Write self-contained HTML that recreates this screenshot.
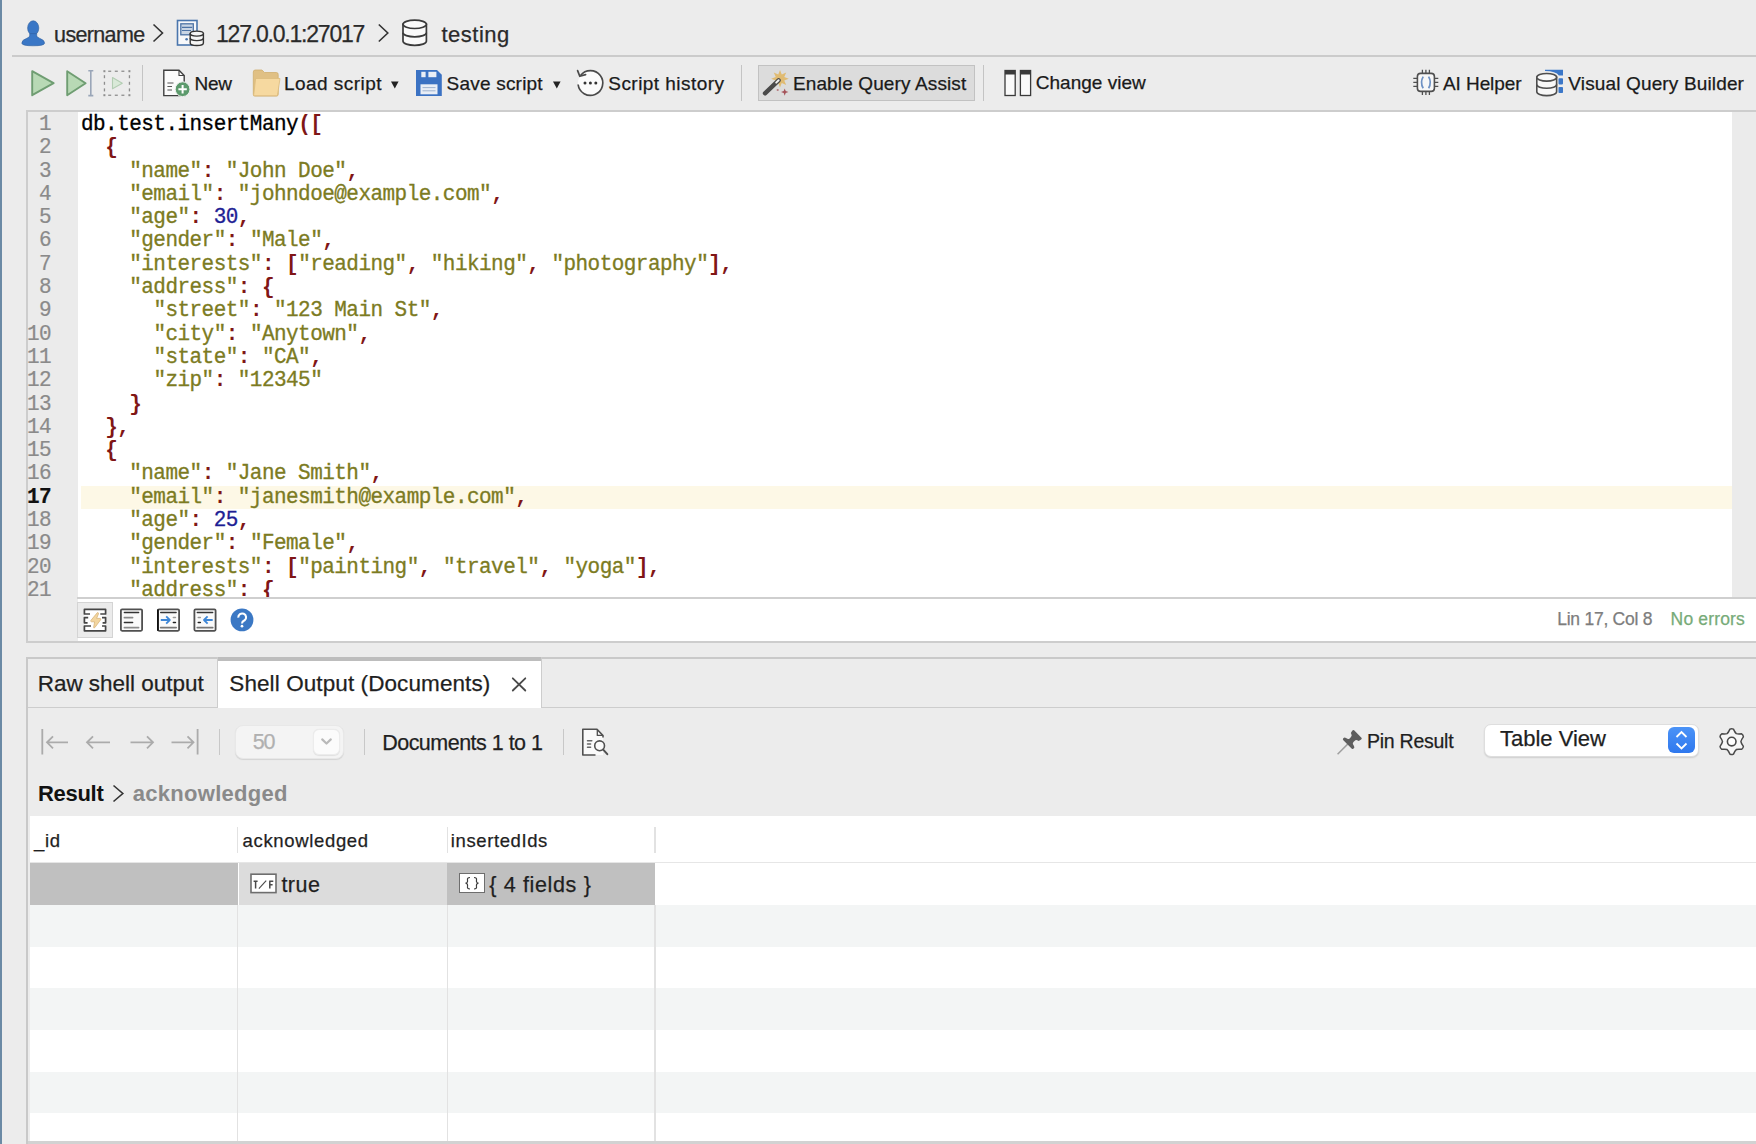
<!DOCTYPE html>
<html><head><meta charset="utf-8"><title>Studio 3T</title>
<style>
html,body{margin:0;padding:0}
body{width:1756px;height:1144px;position:relative;overflow:hidden;background:#ececec;font-family:"Liberation Sans",sans-serif}
.t{position:absolute;white-space:pre;-webkit-text-stroke:0.25px currentColor}
.c{position:absolute;left:81px;white-space:pre;font-family:"Liberation Mono",monospace;font-size:21px;line-height:21px;letter-spacing:-0.54px;-webkit-text-stroke:0.3px currentColor;transform:scaleY(1.08);transform-origin:0 16.1px}
.c span{-webkit-text-stroke:0.3px currentColor}
.c b{font-weight:bold;-webkit-text-stroke:0}
.ln{position:absolute;left:26px;width:25px;text-align:right;font-family:"Liberation Mono",monospace;font-size:21px;line-height:21px;letter-spacing:-0.54px;-webkit-text-stroke:0.2px currentColor;transform:scaleY(1.08);transform-origin:0 16.1px}
</style></head><body>
<div style="position:absolute;left:0px;top:0px;width:2px;height:1144px;background:#6b8aa5;"></div><div style="position:absolute;left:12px;top:55px;width:1744px;height:1.5px;background:#cbcbcb;"></div><div style="position:absolute;left:141.8px;top:65px;width:1.2px;height:35.5px;background:#c4c4c4;"></div><div style="position:absolute;left:741.1px;top:65.4px;width:1.2px;height:35.2px;background:#c4c4c4;"></div><div style="position:absolute;left:757.7px;top:65px;width:217.8px;height:35.6px;background:#dcdcdc;box-sizing:border-box;border:1px solid #c2c2c2;"></div><div style="position:absolute;left:983.0px;top:65px;width:1.2px;height:35.6px;background:#c4c4c4;"></div><div style="position:absolute;left:26px;top:110px;width:1730px;height:533px;background:#cdcdcd;"></div><div style="position:absolute;left:27.5px;top:111.5px;width:1728.5px;height:529.5px;background:#ffffff;"></div><div style="position:absolute;left:27.5px;top:111.5px;width:50.5px;height:529.5px;background:#ebebeb;"></div><div style="position:absolute;left:1732px;top:111.5px;width:24px;height:485.5px;background:#ebebeb;"></div><div style="position:absolute;left:77px;top:597px;width:1679px;height:1.5px;background:#cfcfcf;"></div><div style="position:absolute;left:81px;top:485.5px;width:1651px;height:23px;background:#fdf8e6;"></div><div style="position:absolute;left:0;top:111.5px;width:1732px;height:485.5px;overflow:hidden"><div class="c" style="top:2.41px"><span style="color:#000000">db.test.insertMany</span><b style="color:#801616">([</b></div><div class="ln" style="top:2.41px;color:#8a8a8a;">1</div><div class="c" style="top:25.71px"><span style="color:#000000">  </span><b style="color:#801616">{</b></div><div class="ln" style="top:25.71px;color:#8a8a8a;">2</div><div class="c" style="top:49.01px"><span style="color:#000000">    </span><span style="color:#7c7b22">&quot;name&quot;</span><b style="color:#801616">: </b><span style="color:#7c7b22">&quot;John Doe&quot;</span><b style="color:#801616">,</b></div><div class="ln" style="top:49.01px;color:#8a8a8a;">3</div><div class="c" style="top:72.31px"><span style="color:#000000">    </span><span style="color:#7c7b22">&quot;email&quot;</span><b style="color:#801616">: </b><span style="color:#7c7b22">&quot;johndoe@example.com&quot;</span><b style="color:#801616">,</b></div><div class="ln" style="top:72.31px;color:#8a8a8a;">4</div><div class="c" style="top:95.61px"><span style="color:#000000">    </span><span style="color:#7c7b22">&quot;age&quot;</span><b style="color:#801616">: </b><span style="color:#1e1e94">30</span><b style="color:#801616">,</b></div><div class="ln" style="top:95.61px;color:#8a8a8a;">5</div><div class="c" style="top:118.91px"><span style="color:#000000">    </span><span style="color:#7c7b22">&quot;gender&quot;</span><b style="color:#801616">: </b><span style="color:#7c7b22">&quot;Male&quot;</span><b style="color:#801616">,</b></div><div class="ln" style="top:118.91px;color:#8a8a8a;">6</div><div class="c" style="top:142.21px"><span style="color:#000000">    </span><span style="color:#7c7b22">&quot;interests&quot;</span><b style="color:#801616">: [</b><span style="color:#7c7b22">&quot;reading&quot;</span><b style="color:#801616">, </b><span style="color:#7c7b22">&quot;hiking&quot;</span><b style="color:#801616">, </b><span style="color:#7c7b22">&quot;photography&quot;</span><b style="color:#801616">],</b></div><div class="ln" style="top:142.21px;color:#8a8a8a;">7</div><div class="c" style="top:165.51px"><span style="color:#000000">    </span><span style="color:#7c7b22">&quot;address&quot;</span><b style="color:#801616">: {</b></div><div class="ln" style="top:165.51px;color:#8a8a8a;">8</div><div class="c" style="top:188.81px"><span style="color:#000000">      </span><span style="color:#7c7b22">&quot;street&quot;</span><b style="color:#801616">: </b><span style="color:#7c7b22">&quot;123 Main St&quot;</span><b style="color:#801616">,</b></div><div class="ln" style="top:188.81px;color:#8a8a8a;">9</div><div class="c" style="top:212.11px"><span style="color:#000000">      </span><span style="color:#7c7b22">&quot;city&quot;</span><b style="color:#801616">: </b><span style="color:#7c7b22">&quot;Anytown&quot;</span><b style="color:#801616">,</b></div><div class="ln" style="top:212.11px;color:#8a8a8a;">10</div><div class="c" style="top:235.41px"><span style="color:#000000">      </span><span style="color:#7c7b22">&quot;state&quot;</span><b style="color:#801616">: </b><span style="color:#7c7b22">&quot;CA&quot;</span><b style="color:#801616">,</b></div><div class="ln" style="top:235.41px;color:#8a8a8a;">11</div><div class="c" style="top:258.71px"><span style="color:#000000">      </span><span style="color:#7c7b22">&quot;zip&quot;</span><b style="color:#801616">: </b><span style="color:#7c7b22">&quot;12345&quot;</span></div><div class="ln" style="top:258.71px;color:#8a8a8a;">12</div><div class="c" style="top:282.01px"><span style="color:#000000">    </span><b style="color:#801616">}</b></div><div class="ln" style="top:282.01px;color:#8a8a8a;">13</div><div class="c" style="top:305.31px"><span style="color:#000000">  </span><b style="color:#801616">},</b></div><div class="ln" style="top:305.31px;color:#8a8a8a;">14</div><div class="c" style="top:328.61px"><span style="color:#000000">  </span><b style="color:#801616">{</b></div><div class="ln" style="top:328.61px;color:#8a8a8a;">15</div><div class="c" style="top:351.91px"><span style="color:#000000">    </span><span style="color:#7c7b22">&quot;name&quot;</span><b style="color:#801616">: </b><span style="color:#7c7b22">&quot;Jane Smith&quot;</span><b style="color:#801616">,</b></div><div class="ln" style="top:351.91px;color:#8a8a8a;">16</div><div class="c" style="top:375.21px"><span style="color:#000000">    </span><span style="color:#7c7b22">&quot;email&quot;</span><b style="color:#801616">: </b><span style="color:#7c7b22">&quot;janesmith@example.com&quot;</span><b style="color:#801616">,</b></div><div class="ln" style="top:375.21px;color:#111;font-weight:bold;">17</div><div class="c" style="top:398.51px"><span style="color:#000000">    </span><span style="color:#7c7b22">&quot;age&quot;</span><b style="color:#801616">: </b><span style="color:#1e1e94">25</span><b style="color:#801616">,</b></div><div class="ln" style="top:398.51px;color:#8a8a8a;">18</div><div class="c" style="top:421.81px"><span style="color:#000000">    </span><span style="color:#7c7b22">&quot;gender&quot;</span><b style="color:#801616">: </b><span style="color:#7c7b22">&quot;Female&quot;</span><b style="color:#801616">,</b></div><div class="ln" style="top:421.81px;color:#8a8a8a;">19</div><div class="c" style="top:445.11px"><span style="color:#000000">    </span><span style="color:#7c7b22">&quot;interests&quot;</span><b style="color:#801616">: [</b><span style="color:#7c7b22">&quot;painting&quot;</span><b style="color:#801616">, </b><span style="color:#7c7b22">&quot;travel&quot;</span><b style="color:#801616">, </b><span style="color:#7c7b22">&quot;yoga&quot;</span><b style="color:#801616">],</b></div><div class="ln" style="top:445.11px;color:#8a8a8a;">20</div><div class="c" style="top:468.41px"><span style="color:#000000">    </span><span style="color:#7c7b22">&quot;address&quot;</span><b style="color:#801616">: {</b></div><div class="ln" style="top:468.41px;color:#8a8a8a;">21</div></div><div style="position:absolute;left:77px;top:602.4px;width:36px;height:35.6px;background:#ebebeb;box-sizing:border-box;border:1px solid #d4d4d4;"></div><div style="position:absolute;left:26px;top:657.0px;width:1730px;height:487.0px;background:#c9c9c9;"></div><div style="position:absolute;left:27.5px;top:659.0px;width:1728.5px;height:485.0px;background:#ececec;"></div><div style="position:absolute;left:27.5px;top:707px;width:1728.5px;height:1.3px;background:#cdcdcd;"></div><div style="position:absolute;left:217px;top:657.0px;width:1.3px;height:50.5px;background:#cdcdcd;"></div><div style="position:absolute;left:218.3px;top:657.0px;width:322.7px;height:51.299999999999955px;background:#ffffff;"></div><div style="position:absolute;left:218.3px;top:656.5px;width:322.7px;height:4.3px;background:#bdbdbd;"></div><div style="position:absolute;left:541px;top:657.0px;width:1.3px;height:50.5px;background:#cdcdcd;"></div><div style="position:absolute;left:218.6px;top:728.5px;width:1.3px;height:26.5px;background:#c8c8c8;"></div><div style="position:absolute;left:234.7px;top:725.2px;width:109px;height:34px;background:#f4f4f4;box-sizing:border-box;border:1px solid #e8e8e8;border-radius:8px;box-shadow:0 1px 1px rgba(0,0,0,0.10);"></div><div style="position:absolute;left:313.2px;top:728.6px;width:26.6px;height:26.6px;background:#fbfbfb;box-sizing:border-box;border:1px solid #ececec;border-radius:6px;box-shadow:0 0.5px 1px rgba(0,0,0,0.08);"></div><div style="position:absolute;left:364.0px;top:728.5px;width:1.3px;height:26.5px;background:#c8c8c8;"></div><div style="position:absolute;left:562.5px;top:728.5px;width:1.3px;height:26.5px;background:#c8c8c8;"></div><div style="position:absolute;left:1484.3px;top:723.7px;width:214.3px;height:33.5px;background:#ffffff;box-sizing:border-box;border:1px solid #dedede;border-radius:7px;box-shadow:0 1px 1.5px rgba(0,0,0,0.12);"></div><div style="position:absolute;left:1668px;top:726.9px;width:27px;height:26.5px;background:linear-gradient(#4b93f7,#2f78ee);border-radius:6px;"></div><div style="position:absolute;left:30px;top:816.3px;width:1726px;height:324.70000000000005px;background:#ffffff;"></div><div style="position:absolute;left:27.5px;top:816px;width:2.5px;height:325px;background:#ececec;"></div><div style="position:absolute;left:30px;top:904.6px;width:1726px;height:42.10000000000002px;background:#f3f5f5;"></div><div style="position:absolute;left:30px;top:988.4px;width:1726px;height:41.69999999999993px;background:#f3f5f5;"></div><div style="position:absolute;left:30px;top:1071.6px;width:1726px;height:41.5px;background:#f3f5f5;"></div><div style="position:absolute;left:30px;top:862px;width:1726px;height:1px;background:#e6e6e6;"></div><div style="position:absolute;left:30px;top:863px;width:207.5px;height:41.60000000000002px;background:#c0c0c0;"></div><div style="position:absolute;left:238.5px;top:863px;width:208.0px;height:41.60000000000002px;background:#dcdcdc;"></div><div style="position:absolute;left:446.5px;top:863px;width:208.5px;height:41.60000000000002px;background:#c0c0c0;"></div><div style="position:absolute;left:237.3px;top:827px;width:1.2px;height:26px;background:#e2e2e2;"></div><div style="position:absolute;left:237.3px;top:904.6px;width:1.2px;height:236.39999999999998px;background:#e2e2e2;"></div><div style="position:absolute;left:446.5px;top:827px;width:1.2px;height:26px;background:#e2e2e2;"></div><div style="position:absolute;left:446.5px;top:904.6px;width:1.2px;height:236.39999999999998px;background:#e2e2e2;"></div><div style="position:absolute;left:654.4px;top:827px;width:1.2px;height:26px;background:#e2e2e2;"></div><div style="position:absolute;left:654.4px;top:904.6px;width:1.2px;height:236.39999999999998px;background:#e2e2e2;"></div><div style="position:absolute;left:459px;top:873.2px;width:26px;height:20.2px;background:#ffffff;box-sizing:border-box;border:1.6px solid #6e6e6e;"></div><div style="position:absolute;left:27.5px;top:1141px;width:1728.5px;height:3px;background:#d2d2d2;"></div>
<svg width="1756" height="1144" style="position:absolute;left:0;top:0"><g fill="#3a77c6" stroke="#2f5f9e" stroke-width="0.6"><ellipse cx="33.2" cy="28" rx="5.6" ry="7.2"/><path d="M29.6 33.6 Q30.5 37 27 38.2 Q21.6 40 21.8 43.2 Q22.2 45.8 33.2 45.8 Q44.2 45.8 44.6 43.2 Q44.8 40 39.4 38.2 Q35.9 37 36.8 33.6 Z"/></g><path d="M153.5 24.5 L162.5 33 L153.5 41.5" fill="none" stroke="#333" stroke-width="1.6"/><g><rect x="177.5" y="20.5" width="19.5" height="24.5" fill="#f7f8fa" stroke="#4a76ad" stroke-width="1.6"/><rect x="180.8" y="23.8" width="12.5" height="11" fill="#c9d5e4" stroke="#4d73a5" stroke-width="1.3"/><path d="M182 27.3 H192.2 M182 30.5 H191" stroke="#4d73a5" stroke-width="1.2"/><circle cx="186.6" cy="39.2" r="1.3" fill="#4a76ad"/><g fill="#f6f6f6" stroke="#333" stroke-width="1.4"><path d="M190.2 33.6 V43 A6.6 2.5 0 0 0 203.4 43 V33.6 Z"/><ellipse cx="196.8" cy="33.6" rx="6.6" ry="2.5"/><path d="M190.2 38.1 A6.6 2.5 0 0 0 203.4 38.1" fill="none"/></g></g><path d="M378.8 24.5 L387.8 33 L378.8 41.5" fill="none" stroke="#333" stroke-width="1.6"/><g fill="#fafafa" stroke="#3a3a3a" stroke-width="1.7"><path d="M403 24.3 V41.3 A11.7 4 0 0 0 426.4 41.3 V24.3 Z"/><ellipse cx="414.7" cy="24.3" rx="11.7" ry="4.2"/><path d="M403 32.8 A11.7 4 0 0 0 426.4 32.8" fill="none"/></g><path d="M32.2 71.2 L53.6 83.2 L32.2 95.2 Z" fill="#b8d9b5" stroke="#6f9d72" stroke-width="1.9" stroke-linejoin="round"/><path d="M67.2 71.2 L85.6 83.2 L67.2 95.2 Z" fill="#b8d9b5" stroke="#6f9d72" stroke-width="1.9" stroke-linejoin="round"/><path d="M90.8 70.8 V95.6 M88.3 70.8 H93.3 M88.3 95.6 H93.3" stroke="#9aa6b8" stroke-width="1.6" fill="none"/><g fill="#8e8e8e"><rect x="103.4" y="70.2" width="2" height="2"/><rect x="128.4" y="70.2" width="2" height="2"/><rect x="103.4" y="94.2" width="2" height="2"/><rect x="128.4" y="94.2" width="2" height="2"/><rect x="108.2" y="70.6" width="3" height="1.3"/><rect x="108.2" y="94.6" width="3" height="1.3"/><rect x="103.8" y="75.2" width="1.3" height="3"/><rect x="128.8" y="75.2" width="1.3" height="3"/><rect x="114.8" y="70.6" width="3" height="1.3"/><rect x="114.8" y="94.6" width="3" height="1.3"/><rect x="103.8" y="81.8" width="1.3" height="3"/><rect x="128.8" y="81.8" width="1.3" height="3"/><rect x="121.4" y="70.6" width="3" height="1.3"/><rect x="121.4" y="94.6" width="3" height="1.3"/><rect x="103.8" y="88.4" width="1.3" height="3"/><rect x="128.8" y="88.4" width="1.3" height="3"/></g><path d="M112.5 77.6 L122.3 83.2 L112.5 88.8 Z" fill="#d9e9d8" stroke="#b3cdb3" stroke-width="1.1" stroke-linejoin="round"/><path d="M163.8 70.3 H179 L184.2 75.5 V95.6 H163.8 Z" fill="#fbfbfb" stroke="#3f3f3f" stroke-width="1.4"/><path d="M179 70.3 V75.5 H184.2" fill="none" stroke="#3f3f3f" stroke-width="1.1"/><path d="M167.4 83 H173.5 M167.4 86.5 H172 M167.4 90 H172" stroke="#555" stroke-width="1.2"/><circle cx="182.6" cy="89.2" r="7.4" fill="#5c9a6c" stroke="#f0f0f0" stroke-width="1"/><path d="M182.6 85 V93.4 M178.4 89.2 H186.8" stroke="#fff" stroke-width="2"/><path d="M253.3 72 Q253.3 70 255.3 70 H262 L264.5 72.5 H276.5 Q278.2 72.5 278.2 74.5 V94.5 Q278.2 96 276.5 96 H255 Q253.3 96 253.3 94.3 Z" fill="#e0c084" stroke="#d0ae6e" stroke-width="0.8"/><path d="M255.6 78.5 H280 L277.4 95.8 H253.6 Z" fill="#f6d9a0" stroke="#dcbb7c" stroke-width="0.8"/><path d="M391 81.6 H398.6 L394.8 88.4 Z" fill="#222"/><path d="M416 70 H437 L441.8 74.8 V96 H416 Z" fill="#3b72c3"/><rect x="421.3" y="71.8" width="4.3" height="5.4" fill="#e9eef6"/><rect x="428.4" y="71.8" width="8" height="5.4" fill="#e9eef6"/><rect x="420.5" y="84.3" width="17" height="10" fill="#e9eef6"/><path d="M422.5 87.6 H435.5 M422.5 90.8 H435.5" stroke="#9fb3cf" stroke-width="1"/><path d="M553 81.6 H560.6 L556.8 88.4 Z" fill="#222"/><circle cx="590.4" cy="83" r="12.4" fill="#fbfbfb" stroke="none"/><path d="M580.6 75.4 A12.4 12.4 0 1 1 578.1 84.5" fill="none" stroke="#4a4a4a" stroke-width="1.7"/><path d="M577.6 70.6 L579.8 76.3 L585.6 74.6" fill="none" stroke="#4a4a4a" stroke-width="1.7" stroke-linejoin="round" stroke-linecap="round"/><circle cx="585" cy="83" r="1.5" fill="#333"/><circle cx="590.4" cy="83" r="1.5" fill="#333"/><circle cx="595.8" cy="83" r="1.5" fill="#333"/><polygon points="780.00,70.00 781.76,74.55 786.22,72.58 784.25,77.04 788.80,78.80 784.25,80.56 786.22,85.02 781.76,83.05 780.00,87.60 778.24,83.05 773.78,85.02 775.75,80.56 771.20,78.80 775.75,77.04 773.78,72.58 778.24,74.55" fill="#e0bb72"/><path d="M765 93.3 L778.6 80.3" stroke="#4a4a4a" stroke-width="4.4" stroke-linecap="round"/><path d="M776.2 82.6 L778.6 80.3" stroke="#f2f2f2" stroke-width="2" stroke-linecap="round"/><path d="M784.7 88.4 L785.7 91.1 L788.4 92.1 L785.7 93.1 L784.7 95.8 L783.7 93.1 L781 92.1 L783.7 91.1 Z" fill="#a5545a"/><circle cx="777.7" cy="90" r="1.1" fill="#b57a7e"/><g fill="#fafafa" stroke="#3a3a3a" stroke-width="1.3"><rect x="1005" y="70.5" width="10.2" height="25"/><rect x="1020.4" y="70.5" width="10.2" height="25"/></g><rect x="1005" y="70.5" width="10.2" height="4" fill="#3a3a3a"/><rect x="1020.4" y="70.5" width="10.2" height="4" fill="#3a3a3a"/><g stroke="#4f4f4f" fill="none"><rect x="1417.4" y="73.4" width="17" height="18" rx="3.2" fill="#f7f7f7" stroke-width="1.6"/><path d="M1422.4 69.8 V73.4 M1425.9 69.8 V73.4 M1429.4 69.8 V73.4 M1422.4 91.4 V95 M1425.9 91.4 V95 M1429.4 91.4 V95 M1413.3 78.4 H1417.4 M1413.3 82.4 H1417.4 M1413.3 86.4 H1417.4 M1434.4 78.4 H1438.3 M1434.4 82.4 H1438.3 M1434.4 86.4 H1438.3" stroke-width="1.3"/></g><path d="M1423.2 76.6 Q1419.8 82.4 1423.2 88.2 M1428.6 76.6 Q1432 82.4 1428.6 88.2" stroke="#6f92c4" stroke-width="1.7" fill="none"/><path d="M1545 69.8 H1563 V75.6 H1558.9 Q1556 71.2 1545 71.1 Z" fill="#3b77c8"/><rect x="1558.5" y="78.3" width="4.5" height="6.1" rx="0.8" fill="#3b77c8"/><rect x="1558.5" y="86.9" width="4.5" height="6.2" rx="0.8" fill="#3b77c8"/><g fill="#f8f8f8" stroke="#4e4e4e" stroke-width="1.6"><path d="M1536.8 77.3 V91.8 A9.9 3.8 0 0 0 1556.6 91.8 V77.3 Z"/><ellipse cx="1546.7" cy="77.3" rx="9.9" ry="3.8"/><path d="M1536.8 84.5 A9.9 3.8 0 0 0 1556.6 84.5" fill="none"/></g><rect x="84.4" y="609.4" width="21.2" height="21.4" fill="#ffffff"/><g fill="none" stroke="#454545" stroke-width="1.7" stroke-linejoin="round"><path d="M90 614 H84.4 V609.4 H105.6 V614 H100.3"/><path d="M91 626 H84.4 V630.8 H105.6 V626 H102"/><path d="M88.2 617.6 H84.4 V622.8 H87.6 M102 617.6 H105.6 V622.8 H102.6"/></g><path d="M97.4 612.6 Q98.8 612.6 98.4 614 L96.6 618.4 H100 Q101.3 618.6 100.6 619.8 L94.8 627.6 Q93.6 628.6 93.7 627.2 L94.6 621.8 H91.6 Q90.3 621.6 90.9 620.4 Z" fill="#f3d69f" stroke="#d8b47a" stroke-width="0.8" stroke-linejoin="round"/><rect x="120.9" y="609.4" width="21.2" height="21.4" rx="1.2" fill="#fafafa" stroke="#505050" stroke-width="1.8"/><path d="M124.4 612.6 H138.6 M124.4 622.6 H132.6" stroke="#333" stroke-width="1.5" stroke-linecap="round"/><path d="M124.4 617.6 H132.6 M124.4 627.6 H138.6" stroke="#8a8a8a" stroke-width="1.7" stroke-linecap="round"/><rect x="157.9" y="609.4" width="21.2" height="21.4" rx="1.2" fill="#fafafa" stroke="#505050" stroke-width="1.8"/><path d="M157.9 609.4 V630.8" stroke="#111" stroke-width="1.8"/><path d="M160.7 612.5 H176.1" stroke="#333" stroke-width="1.4" stroke-linecap="round"/><path d="M160.7 627.6 H176.1" stroke="#777" stroke-width="1.8" stroke-linecap="round"/><path d="M160.8 620 H169.6 M166.2 616.4 L169.8 620 L166.2 623.6" stroke="#3d86d6" stroke-width="1.8" fill="none" stroke-linejoin="round"/><path d="M173.4 617.5 H175.4" stroke="#999" stroke-width="1.6" stroke-linecap="round"/><path d="M173.4 622.5 H175.4" stroke="#222" stroke-width="1.6" stroke-linecap="round"/><rect x="194.4" y="609.4" width="21.2" height="21.4" rx="1.2" fill="#fafafa" stroke="#505050" stroke-width="1.8"/><path d="M197.3 612.5 H212.7" stroke="#333" stroke-width="1.4" stroke-linecap="round"/><path d="M197.3 627.6 H212.7" stroke="#777" stroke-width="1.8" stroke-linecap="round"/><path d="M212.7 620 H204 M207.6 616.4 L204 620 L207.6 623.6" stroke="#3d86d6" stroke-width="1.8" fill="none" stroke-linejoin="round"/><path d="M198.3 617.5 H200.3" stroke="#999" stroke-width="1.6" stroke-linecap="round"/><path d="M198.3 622.5 H200.3" stroke="#222" stroke-width="1.6" stroke-linecap="round"/><circle cx="242" cy="619.9" r="11.4" fill="#3b78c4"/><path d="M238.3 617.6 A3.9 3.8 0 1 1 244.6 620.3 Q242 621.6 242 623.4" fill="none" stroke="#fff" stroke-width="2.1"/><circle cx="242" cy="626.2" r="1.35" fill="#fff"/><path d="M512.8 678.3 L525.3 690.5 M525.3 678.3 L512.8 690.5" stroke="#4a4a4a" stroke-width="1.8" stroke-linecap="round"/><g stroke="#ababab" stroke-width="1.8" fill="none"><path d="M42.3 729 V754.5"/><path d="M68 742.3 H47 M53 736.3 L47 742.3 L53 748.3"/><path d="M110 742.3 H87 M93 736.3 L87 742.3 L93 748.3"/><path d="M130.5 742.3 H153 M147 736.3 L153 742.3 L147 748.3"/><path d="M171.5 742.3 H193.5 M187.5 736.3 L193.5 742.3 L187.5 748.3"/><path d="M197.6 729 V754.5"/></g><path d="M322.2 739.4 L326.5 743.5 L330.8 739.4" stroke="#b9b9b9" stroke-width="2.2" fill="none" stroke-linecap="round" stroke-linejoin="round"/><path d="M582.8 729.2 H597 L603 735.6 V755 H582.8 Z" fill="#fafafa"/><g fill="none" stroke="#505050" stroke-width="1.6" stroke-linejoin="round"><path d="M595.5 755 H582.8 V729.2 H597 L603 735.6 V737.5"/><path d="M597.3 729.8 V735.4 H602.6" stroke-width="1.3"/></g><circle cx="599.6" cy="745.8" r="4.9" fill="#fafafa" stroke="#505050" stroke-width="1.6"/><path d="M603.2 749.6 L607.3 754.2" stroke="#505050" stroke-width="2" stroke-linecap="round"/><path d="M587.5 740.8 H591.8 M587.5 744 H590.6 M587.5 747.3 H590.6" stroke="#666" stroke-width="1.5" stroke-linecap="round"/><g transform="translate(1351 740.8) rotate(45)"><path d="M0 4 V19" stroke="#a0a0a0" stroke-width="1.5"/><path d="M-5.2 -9.6 H5.2 Q6.4 -9.6 6.2 -8.2 L5.9 -6.2 Q5.7 -5 4.5 -5 Q2.6 -4.6 2.6 -2 V-0.6 Q2.6 1.2 5.5 1.5 Q7.4 1.8 7.3 3.2 V3.6 Q7.2 5 5.8 5 H-5.8 Q-7.2 5 -7.3 3.6 V3.2 Q-7.4 1.8 -5.5 1.5 Q-2.6 1.2 -2.6 -0.6 V-2 Q-2.6 -4.6 -4.5 -5 Q-5.7 -5 -5.9 -6.2 L-6.2 -8.2 Q-6.4 -9.6 -5.2 -9.6 Z" fill="#5e5e5e"/></g><path d="M1676.5 737 L1681.5 732 L1686.5 737 M1676.5 743.5 L1681.5 748.5 L1686.5 743.5" stroke="#fff" stroke-width="1.8" fill="none"/><path d="M1729.95 729.12 Q1731.70 728.20 1733.45 729.12 Q1734.98 732.58 1736.30 733.63 Q1737.87 734.25 1741.63 733.84 Q1743.30 734.90 1743.38 736.88 Q1741.15 739.93 1740.90 741.60 Q1741.15 743.27 1743.38 746.32 Q1743.30 748.30 1741.63 749.36 Q1737.87 748.95 1736.30 749.57 Q1734.98 750.62 1733.45 754.08 Q1731.70 755.00 1729.95 754.08 Q1728.42 750.62 1727.10 749.57 Q1725.53 748.95 1721.77 749.36 Q1720.10 748.30 1720.02 746.32 Q1722.25 743.27 1722.50 741.60 Q1722.25 739.93 1720.02 736.88 Q1720.10 734.90 1721.77 733.84 Q1725.53 734.25 1727.10 733.63 Q1728.42 732.58 1729.95 729.12 Z" fill="#f7f7f7" stroke="#4a4a4a" stroke-width="1.5" stroke-linejoin="round"/><circle cx="1731.7" cy="741.6" r="4.3" fill="#fff" stroke="#4a4a4a" stroke-width="1.6"/><path d="M113.5 785.5 L122.8 793.5 L113.5 801.5" fill="none" stroke="#333" stroke-width="1.6"/><rect x="251" y="874.2" width="25" height="18.4" fill="#fff" stroke="#6e6e6e" stroke-width="1.6"/><g stroke="#4a4a4a" fill="none"><path d="M253.6 881.3 H257.6 M255.6 881.3 V888.6" stroke-width="1.5"/><path d="M258.9 888.6 L266.2 880.6" stroke-width="1.1"/><path d="M269.2 881.3 H273.3 M269.8 881.3 V888.6 M269.8 884.7 H272.6" stroke-width="1.5"/></g><path d="M470 877.5 Q467 877.5 467.5 880 Q468 883 465.5 883.2 Q468 883.4 467.5 886.4 Q467 889 470 889 M474 877.5 Q477 877.5 476.5 880 Q476 883 478.5 883.2 Q476 883.4 476.5 886.4 Q477 889 474 889" fill="none" stroke="#3a3a3a" stroke-width="1.2"/></svg>
<div class="t" style="left:54.10px;top:24.60px;font-size:21.5px;line-height:21.5px;color:#2a2a2a;letter-spacing:-0.652px;">username</div><div class="t" style="left:216.00px;top:23.13px;font-size:23px;line-height:23px;color:#2a2a2a;letter-spacing:-1.206px;">127.0.0.1:27017</div><div class="t" style="left:441.50px;top:24.17px;font-size:22px;line-height:22px;color:#2a2a2a;letter-spacing:0.485px;">testing</div><div class="t" style="left:194.40px;top:73.81px;font-size:19px;line-height:19px;color:#1a1a1a;letter-spacing:-0.197px;">New</div><div class="t" style="left:284.10px;top:74.01px;font-size:19px;line-height:19px;color:#1a1a1a;letter-spacing:0.439px;">Load script</div><div class="t" style="left:446.60px;top:74.01px;font-size:19px;line-height:19px;color:#1a1a1a;letter-spacing:0.205px;">Save script</div><div class="t" style="left:608.30px;top:74.01px;font-size:19px;line-height:19px;color:#1a1a1a;letter-spacing:0.452px;">Script history</div><div class="t" style="left:792.90px;top:74.01px;font-size:19px;line-height:19px;color:#1a1a1a;letter-spacing:0.128px;">Enable Query Assist</div><div class="t" style="left:1035.80px;top:73.31px;font-size:19px;line-height:19px;color:#1a1a1a;letter-spacing:0.008px;">Change view</div><div class="t" style="left:1443.00px;top:73.91px;font-size:19px;line-height:19px;color:#1a1a1a;letter-spacing:-0.079px;">AI Helper</div><div class="t" style="left:1568.30px;top:73.91px;font-size:19px;line-height:19px;color:#1a1a1a;letter-spacing:0.147px;">Visual Query Builder</div><div class="t" style="left:1557.20px;top:611.38px;font-size:17.5px;line-height:17.5px;color:#7d7d7d;letter-spacing:-0.247px;">Lin 17, Col 8</div><div class="t" style="left:1670.60px;top:611.38px;font-size:17.5px;line-height:17.5px;color:#77ab78;letter-spacing:0.153px;">No errors</div><div class="t" style="left:37.70px;top:673.45px;font-size:22.5px;line-height:22.5px;color:#1f1f1f;letter-spacing:-0.026px;">Raw shell output</div><div class="t" style="left:229.30px;top:673.45px;font-size:22.5px;line-height:22.5px;color:#1f1f1f;letter-spacing:0.093px;">Shell Output (Documents)</div><div class="t" style="left:252.80px;top:732.10px;font-size:21.5px;line-height:21.5px;color:#b0b0b0;letter-spacing:-1.365px;">50</div><div class="t" style="left:382.20px;top:733.30px;font-size:21.5px;line-height:21.5px;color:#1f1f1f;letter-spacing:-0.517px;">Documents 1 to 1</div><div class="t" style="left:1367.00px;top:732.49px;font-size:19.5px;line-height:19.5px;color:#1f1f1f;letter-spacing:-0.258px;">Pin Result</div><div class="t" style="left:1500.00px;top:728.07px;font-size:22px;line-height:22px;color:#1f1f1f;letter-spacing:-0.004px;">Table View</div><div class="t" style="left:37.90px;top:783.47px;font-size:22px;line-height:22px;color:#111;letter-spacing:-0.282px;font-weight:bold;-webkit-text-stroke:0;">Result</div><div class="t" style="left:132.80px;top:783.47px;font-size:22px;line-height:22px;color:#8a8a8a;letter-spacing:0.275px;font-weight:bold;-webkit-text-stroke:0;">acknowledged</div><div class="t" style="left:34.07px;top:832.24px;font-size:18.5px;line-height:18.5px;color:#1f1f1f;letter-spacing:0.666px;">_id</div><div class="t" style="left:242.60px;top:832.24px;font-size:18.5px;line-height:18.5px;color:#1f1f1f;letter-spacing:0.654px;">acknowledged</div><div class="t" style="left:450.80px;top:832.24px;font-size:18.5px;line-height:18.5px;color:#1f1f1f;letter-spacing:0.603px;">insertedIds</div><div class="t" style="left:281.40px;top:874.70px;font-size:21.5px;line-height:21.5px;color:#1f1f1f;letter-spacing:0.471px;">true</div><div class="t" style="left:489.20px;top:874.70px;font-size:21.5px;line-height:21.5px;color:#1f1f1f;letter-spacing:0.656px;">{ 4 fields }</div>
</body></html>
